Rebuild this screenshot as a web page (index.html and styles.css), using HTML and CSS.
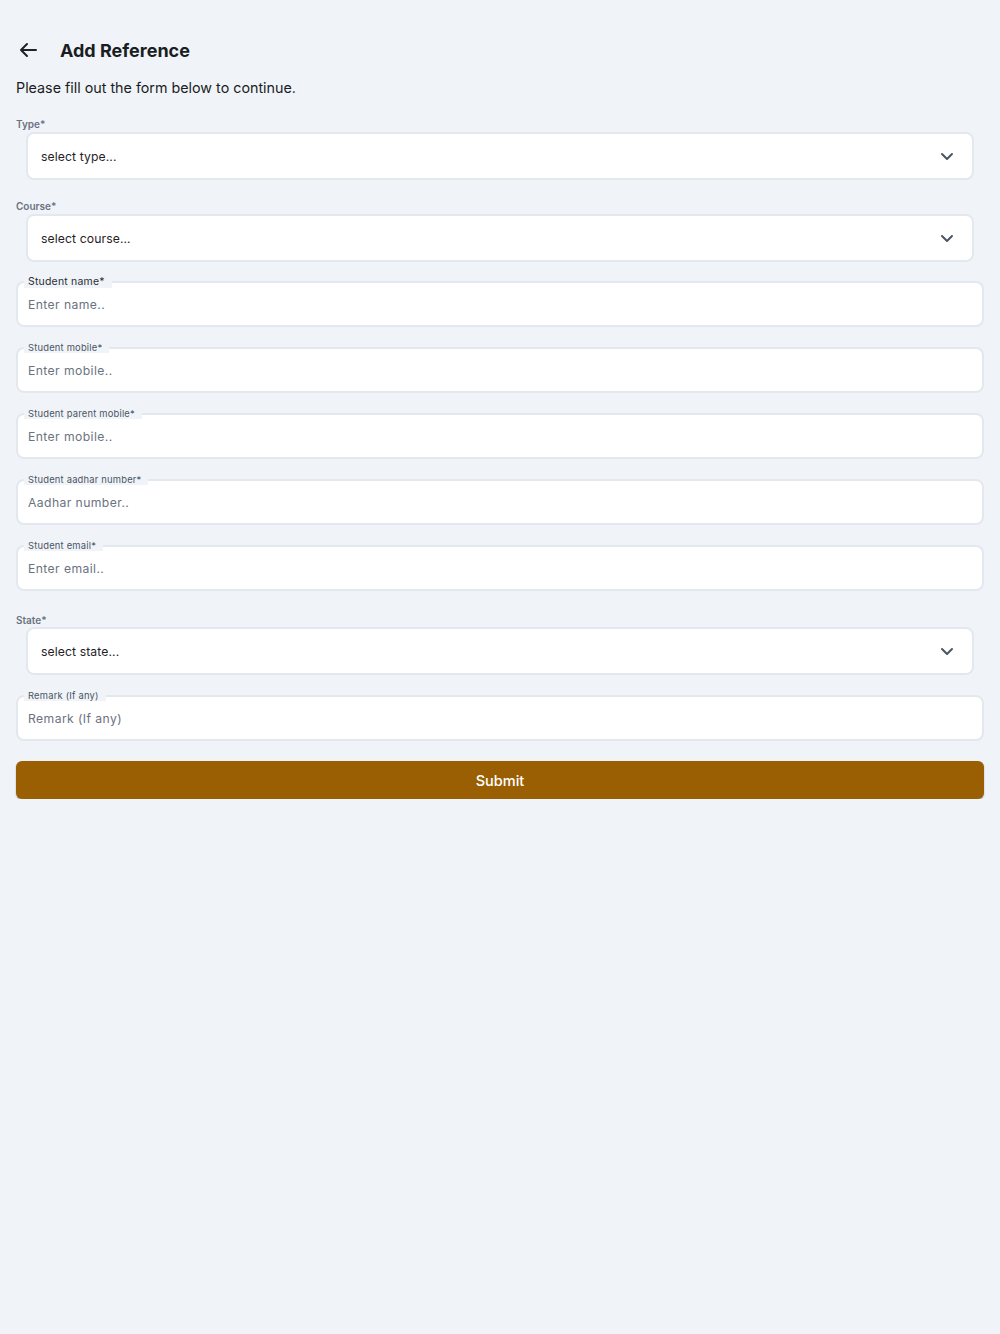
FILE: index.html
```html
<!DOCTYPE html>
<html lang="en">
<head>
<meta charset="utf-8">
<title>Add Reference</title>
<link rel="stylesheet" href="styles.css">
</head>
<body>
<div class="page">
  <header class="header">
    <button class="back" aria-label="Back">
      <svg width="18" height="16" viewBox="0 0 18 16" fill="none" stroke="#1f2328" stroke-width="2" stroke-linecap="round" stroke-linejoin="round"><path d="M17 8H2M8 2L2 8l6 6"/></svg>
    </button>
    <h1 class="title">Add Reference</h1>
  </header>
  <p class="intro">Please fill out the form below to continue.</p>

  <form class="form">
    <div class="select-field">
      <div class="select-label">Type*</div>
      <div class="select-box"><span>select type...</span><svg class="chev" width="14" height="9" viewBox="0 0 14 9" fill="none" stroke="#4b5563" stroke-width="2" stroke-linecap="round" stroke-linejoin="round"><path d="M2 2l5 5 5-5"/></svg></div>
    </div>
    <div class="select-field">
      <div class="select-label">Course*</div>
      <div class="select-box"><span>select course...</span><svg class="chev" width="14" height="9" viewBox="0 0 14 9" fill="none" stroke="#4b5563" stroke-width="2" stroke-linecap="round" stroke-linejoin="round"><path d="M2 2l5 5 5-5"/></svg></div>
    </div>

    <div class="input-field first">
      <span class="float-label big">Student name*</span>
      <span class="placeholder">Enter name..</span>
    </div>
    <div class="input-field">
      <span class="float-label">Student mobile*</span>
      <span class="placeholder">Enter mobile..</span>
    </div>
    <div class="input-field">
      <span class="float-label">Student parent mobile*</span>
      <span class="placeholder">Enter mobile..</span>
    </div>
    <div class="input-field">
      <span class="float-label">Student aadhar number*</span>
      <span class="placeholder">Aadhar number..</span>
    </div>
    <div class="input-field email">
      <span class="float-label">Student email*</span>
      <span class="placeholder">Enter email..</span>
    </div>

    <div class="select-field state">
      <div class="select-label">State*</div>
      <div class="select-box"><span>select state...</span><svg class="chev" width="14" height="9" viewBox="0 0 14 9" fill="none" stroke="#4b5563" stroke-width="2" stroke-linecap="round" stroke-linejoin="round"><path d="M2 2l5 5 5-5"/></svg></div>
    </div>

    <div class="input-field remark">
      <span class="float-label">Remark (If any)</span>
      <span class="placeholder">Remark (If any)</span>
    </div>

    <button type="button" class="submit">Submit</button>
  </form>
</div>
</body>
</html>
```

FILE: styles.css
```css
* { box-sizing: border-box; }
html, body {
  margin: 0;
  padding: 0;
  background: #f0f4f9;
  font-family: Inter, "Noto Sans", sans-serif;
  color: #1f2328;
}
.page {
  padding: 36px 16px 0 16px;
}
.header {
  display: flex;
  align-items: center;
  height: 28px;
}
.back {
  border: 0;
  background: none;
  padding: 0;
  margin-left: 3px;
  width: 18px;
  height: 16px;
  display: flex;
  align-items: center;
  justify-content: center;
}
.title {
  margin: 0 0 0 23px;
  font-size: 18px;
  font-weight: 700;
  color: #1a1d21;
}
.intro {
  margin: 14px 0 0 0;
  font-size: 14.3px;
  line-height: 20px;
  color: #1a1d21;
}
.form {
  display: flex;
  flex-direction: column;
  margin-top: 20px;
}
.select-field {
  display: flex;
  flex-direction: column;
  margin-bottom: 20px;
}
.select-field.state { margin-bottom: 20px; }
.select-label {
  font-size: 10px;
  font-weight: 600;
  color: #6b7280;
  line-height: 12px;
  height: 12px;
  margin-bottom: 2px;
}
.select-field.state .select-label { margin-top: 1px; margin-bottom: 1px; }
.select-box {
  margin: 0 10px;
  height: 48px;
  background: #fff;
  border: 2px solid #e3e8ee;
  border-radius: 8px;
  display: flex;
  align-items: center;
  justify-content: space-between;
  padding: 0 18px 0 13px;
  font-size: 12.2px;
  color: #1f2328;
  letter-spacing: 0.1px;
}
.chev { display: block; margin-top: 1px; }
.input-field {
  position: relative;
  height: 46px;
  background: #fff;
  border: 2px solid #e3e8ee;
  border-radius: 8px;
  margin-bottom: 20px;
  display: flex;
  align-items: center;
  padding: 0 10px;
}
.input-field.first { margin-top: -1px; }
.input-field.email { margin-bottom: 22px; }
.float-label {
  position: absolute;
  top: -7px;
  left: 6px;
  padding: 0 7px 0 4px;
  background: #f0f4f9;
  font-size: 9.4px;
  line-height: 11px;
  color: #4b5563;
  letter-spacing: 0.2px;
}
.float-label.big {
  font-size: 10.5px;
  top: -8px;
  line-height: 13px;
  color: #2a2f36;
}
.placeholder {
  font-size: 12.2px;
  color: #6b7280;
  letter-spacing: 0.4px;
  margin-top: 1px;
}
.submit {
  height: 38px;
  width: 100%;
  border: 0;
  border-radius: 6px;
  background: #9a5f03;
  color: #fff;
  font-family: Inter, "Noto Sans", sans-serif;
  font-size: 14.5px;
  font-weight: 500;
  box-shadow: 0 1px 2px rgba(0,0,0,0.25);
}
```
